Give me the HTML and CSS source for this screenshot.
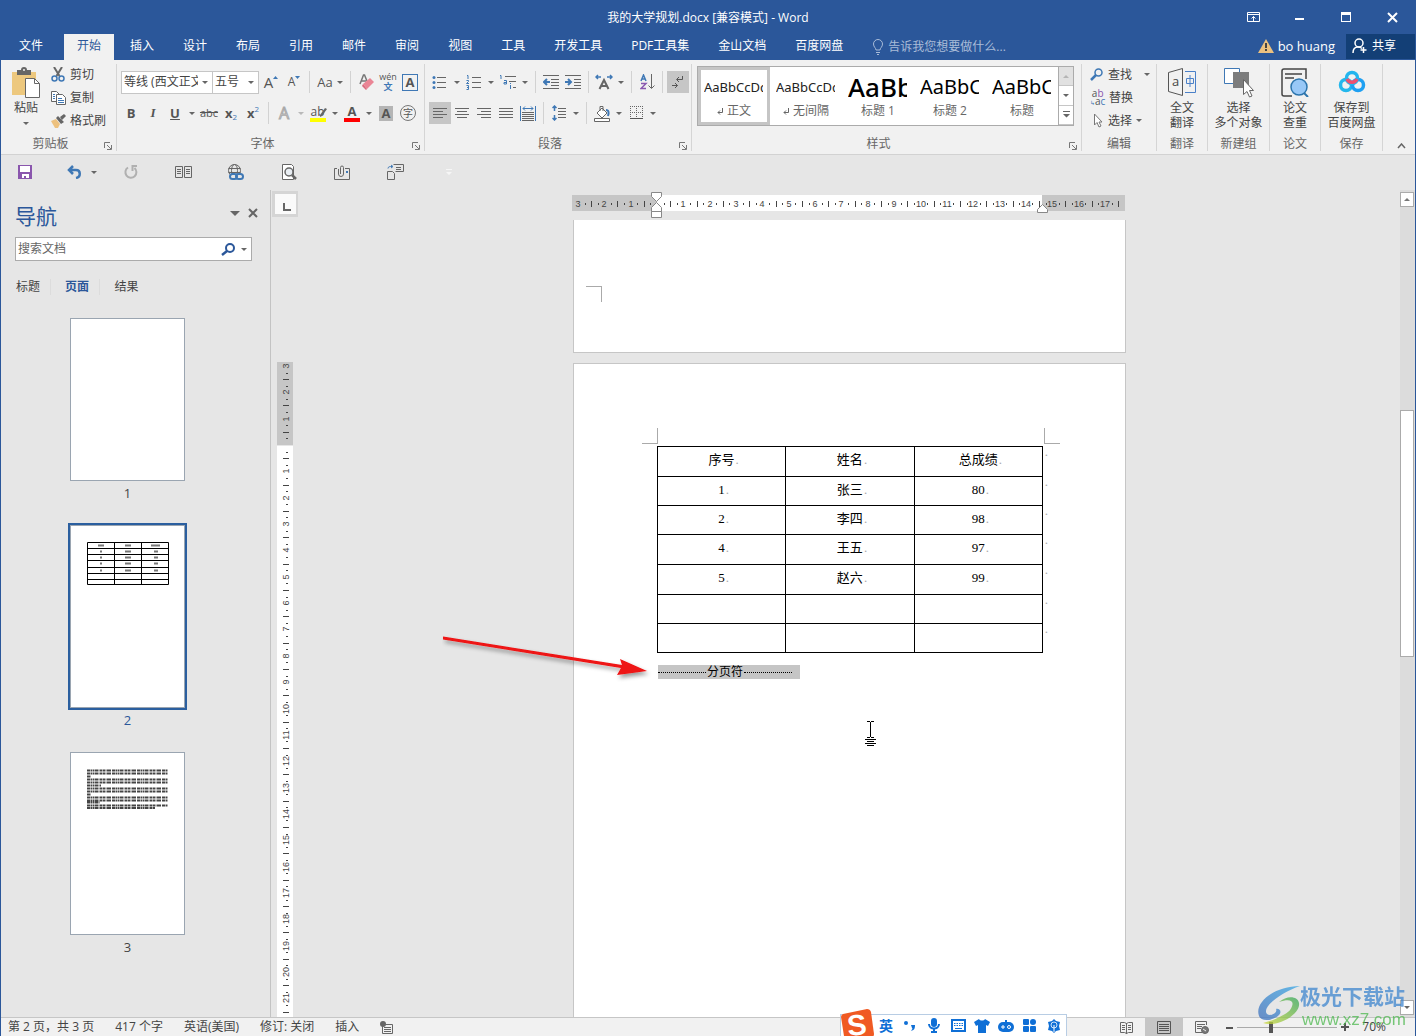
FILE: index.html
```html
<!DOCTYPE html>
<html lang="zh-CN">
<head>
<meta charset="utf-8">
<title>我的大学规划.docx [兼容模式] - Word</title>
<link rel="stylesheet" href="styles.css">
</head>
<body>
<div class="window">
  <header class="titlebar">
    <span></span>
    <h1 class="title">我的大学规划.docx [兼容模式] - Word</h1>
    <div class="win-buttons">
      <button aria-label="功能区显示选项"><svg width="14" height="12" fill="none" stroke="#fff"><path d="M.5 1.5h12v9H.5zM.5 3.500h12M6.500 10V5.500M4.500 7.500l2-2 2 2"/></svg></button>
      <button aria-label="最小化"><svg width="10" height="10"><path d="M0 6h9v2H0z" fill="#fff"/></svg></button>
      <button aria-label="最大化"><svg width="10" height="10"><path d="M0 0h10v10H0zM1 3v6h8V3z" fill="#fff" fill-rule="evenodd"/></svg></button>
      <button aria-label="关闭"><svg width="11" height="11"><path d="M1 1l9 9M10 1l-9 9" stroke="#fff" stroke-width="2"/></svg></button>
    </div>
  </header>

  <nav class="tabs">
    <button class="tab file">文件</button>
    <button class="tab active">开始</button>
    <button class="tab">插入</button>
    <button class="tab">设计</button>
    <button class="tab">布局</button>
    <button class="tab">引用</button>
    <button class="tab">邮件</button>
    <button class="tab">审阅</button>
    <button class="tab">视图</button>
    <button class="tab">工具</button>
    <button class="tab">开发工具</button>
    <button class="tab">PDF工具集</button>
    <button class="tab">金山文档</button>
    <button class="tab">百度网盘</button>
    <button class="tell"><svg width="12" height="16" fill="none" stroke="#a9bcd8"><path d="M4 11c0-2-2.500-3-2.500-6a4.500 4.500 0 0 1 9 0c0 3-2.500 4-2.500 6zM4 13.500h4M5 15.500h2"/></svg>告诉我您想要做什么...</button>
    <div class="account">
      <svg width="16" height="14"><path d="M8 0l8 14H0z" fill="#ecc17f"/><path d="M7 4h2v5H7zM7 10h2v2H7z" fill="#444"/></svg>
      <span>bo huang</span>
    </div>
    <button class="share"><svg width="16" height="16" fill="none" stroke="#fff" stroke-width="1.500"><circle cx="7" cy="5" r="4"/><path d="M1 15c0-4 2-6 5-6 2 0 3 .5 4 1.500M11.500 9v6M8.500 12h6"/></svg>共享</button>
  </nav>

  <section class="ribbon">
    <div class="group g-clip">
      <div class="body clip">
        <button class="paste">
          <svg width="30" height="32"><path d="M1 5h24v23H1z" fill="#edc87e"/><path d="M6 8V3h4a3 3 0 0 1 6 0h4v5z" fill="#666"/><circle cx="13" cy="3" r="1" fill="#f1f1f1"/><path d="M14.500 11.500h9l5 5v14h-14z" fill="#fff" stroke="#666"/><path d="M23.500 11.500v5h5" fill="none" stroke="#666"/></svg>
          <span>粘贴</span><i class="caret"></i>
        </button>
        <div class="stack">
          <button class="line"><svg width="14" height="15" fill="none"><path d="M3 0l5.500 9M11 0L5.500 9" stroke="#666" stroke-width="2"/><circle cx="3.500" cy="11.500" r="2.500" stroke="#3f78b5" stroke-width="1.500"/><circle cx="10.500" cy="11.500" r="2.500" stroke="#3f78b5" stroke-width="1.500"/></svg>剪切</button>
          <button class="line"><svg width="15" height="14" stroke="#666" fill="#fff"><path d="M.5.5h5l3 3v7h-8z"/><path d="M5.500 3.500h6l3 3v7h-9z"/><path d="M7 7.500h4M7 9.500h6M7 11.500h6M2 3.500h2M2 5.500h2M2 7.500h2" stroke="#3f78b5"/></svg>复制</button>
          <button class="line"><svg width="15" height="14"><path d="M0 7l5-2 4 5-2 4H4z" fill="#edc17e"/><path d="M5 4l2-2 6 6-3 2zM9 3l4-3 2 2-4 4z" fill="#666"/></svg>格式刷</button>
        </div>
      </div>
      <div class="foot"><span>剪贴板</span><button class="launch" aria-label="剪贴板选项"><svg width="8" height="8"><path d="M.5 6V.5H6M3 3l4 4M7.500 3v4.500H3" fill="none" stroke="#777"/></svg></button></div>
    </div>

    <div class="group g-font">
      <div class="body rows">
        <div class="row">
          <span class="combo wide"><select aria-label="字体"><option>等线 (西文正文)</option></select></span>
          <span class="combo"><select aria-label="字号"><option>五号</option></select></span>
          <button class="ib big" aria-label="增大字号">A<svg width="5" height="14"><path d="M0 4l2.500-3L5 4z" fill="#3f78b5"/></svg></button>
          <button class="ib" aria-label="减小字号">A<svg width="5" height="14"><path d="M0 1h5L2.500 4z" fill="#3f78b5"/></svg></button>
          <i class="sep"></i>
          <button class="ib mid">Aa<i class="caret"></i></button>
          <i class="sep"></i>
          <button class="ib" aria-label="清除格式"><svg width="15" height="16"><path d="M1 10L4.500 1h1L8 7M2.500 7H7" stroke="#777" fill="none" stroke-width="1.500"/><path d="M4 10l7-6 4 4-7 7z" fill="#ea8595"/><path d="M4 10l4 5-1 1-4-4z" fill="#d96a7d"/></svg></button>
          <button class="ib pinyin" aria-label="拼音指南"><span>wén</span><b>文</b></button>
          <button class="ib" aria-label="字符边框"><b class="boxed">A</b></button>
        </div>
        <div class="row r2">
          <button class="ib"><b>B</b></button>
          <button class="ib"><b class="ital">I</b></button>
          <button class="ib"><b class="under">U</b></button>
          <button class="cb" aria-label="下划线选项"><i class="caret"></i></button>
          <button class="ib strike">abc</button>
          <button class="ib"><b>x</b><sub>2</sub></button>
          <button class="ib"><b>x</b><sup>2</sup></button>
          <i class="sep"></i>
          <button class="ib outline">A</button>
          <button class="cb dim" aria-label="文本效果选项"><i class="caret"></i></button>
          <button class="ib" aria-label="突出显示"><span class="bar hi">ab</span><svg class="pen" width="8" height="10"><path d="M8 1L3 8 1 9V7l5-7z" fill="#666"/></svg></button>
          <button class="cb" aria-label="突出显示颜色"><i class="caret"></i></button>
          <button class="ib" aria-label="字体颜色"><b class="bar red">A</b></button>
          <button class="cb" aria-label="字体颜色选项"><i class="caret"></i></button>
          <button class="ib"><b class="shade">A</b></button>
          <button class="ib"><span class="ring">字</span></button>
        </div>
      </div>
      <div class="foot"><span>字体</span><button class="launch" aria-label="字体选项"><svg width="8" height="8"><path d="M.5 6V.5H6M3 3l4 4M7.500 3v4.500H3" fill="none" stroke="#777"/></svg></button></div>
    </div>

    <div class="group g-para">
      <div class="body rows">
        <div class="row">
          <button class="ib" aria-label="项目符号"><svg width="16" height="16"><path d="M5 3.500h9M5 8.500h9M5 13.500h9" stroke="#666"/><g fill="#3f78b5"><circle cx="2" cy="3.500" r="1.500"/><circle cx="2" cy="8.500" r="1.500"/><circle cx="2" cy="13.500" r="1.500"/></g></svg></button>
          <button class="cb" aria-label="项目符号选项"><i class="caret"></i></button>
          <button class="ib" aria-label="编号"><svg width="16" height="16" fill="none"><path d="M6 3.500h9M6 8.500h9M6 13.500h9" stroke="#666"/><path d="M1 1.500h1V5M.5 6.500h2v1l-2 2h2.500M.5 11.500h2v4h-2M1 13.500h1" stroke="#3f78b5"/></svg></button>
          <button class="cb" aria-label="编号选项"><i class="caret"></i></button>
          <button class="ib" aria-label="多级列表"><svg width="18" height="16" fill="none"><path d="M6 2.500h11M10 7.500h7M14 13.500h3" stroke="#666"/><path d="M1 1.500h1V5M5 6.500h2.500V10H5V8.500h2M11.500 11v4M11.500 9v1" stroke="#3f78b5"/></svg></button>
          <button class="cb" aria-label="多级列表选项"><i class="caret"></i></button>
          <i class="sep"></i>
          <button class="ib" aria-label="减少缩进"><svg width="16" height="14"><path d="M0 .5h16M8 4.500h8M8 7.500h8M8 10.500h8M0 13.500h16" stroke="#666"/><path d="M7 7H2M4 4L1 7l3 3" stroke="#3f78b5" stroke-width="2" fill="none"/></svg></button>
          <button class="ib" aria-label="增加缩进"><svg width="16" height="14"><path d="M0 .5h16M9 4.500h7M9 7.500h7M9 10.500h7M0 13.500h16" stroke="#666"/><path d="M0 7h6M3 4l3 3-3 3" stroke="#3f78b5" stroke-width="2" fill="none"/></svg></button>
          <i class="sep"></i>
          <button class="ib" aria-label="中文版式"><svg width="18" height="16" fill="none"><path d="M4.500 15L9 6l4.500 9M6 12h6" stroke="#666" stroke-width="2"/><path d="M1 3h5M3 1L1 3l2 2M12 3h5M15 1l2 2-2 2" stroke="#3f78b5" stroke-width="1.500"/></svg></button>
          <button class="cb" aria-label="中文版式选项"><i class="caret"></i></button>
          <i class="sep"></i>
          <button class="ib" aria-label="排序"><svg width="15" height="16" fill="none"><path d="M1 7l2.500-6L6 7M2 5h3" stroke="#3f78b5" stroke-width="1.500"/><path d="M1 9.500h5l-5 5h5" stroke="#8a5ab0" stroke-width="1.500"/><path d="M11.500 0v14M8.500 11.500l3 3 3-3" stroke="#666"/></svg></button>
          <i class="sep"></i>
          <button class="ib on" aria-label="显示编辑标记"><svg width="12" height="14" fill="none" stroke="#555"><path d="M10.500 1v3.500H5M7 2L4.500 4.500 7 7M0 10.500h5.500M3 8l2.500 2.500L3 13"/></svg></button>
        </div>
        <div class="row">
          <button class="ib on" aria-label="左对齐"><svg width="14" height="11"><path d="M0 .5h14M0 3.500h10M0 6.500h14M0 9.500h10" stroke="#666"/></svg></button>
          <button class="ib" aria-label="居中"><svg width="14" height="11"><path d="M0 .5h14M2 3.500h10M0 6.500h14M2 9.500h10" stroke="#666"/></svg></button>
          <button class="ib" aria-label="右对齐"><svg width="14" height="11"><path d="M0 .5h14M4 3.500h10M0 6.500h14M4 9.500h10" stroke="#666"/></svg></button>
          <button class="ib" aria-label="两端对齐"><svg width="14" height="11"><path d="M0 .5h14M0 3.500h14M0 6.500h14M0 9.500h14" stroke="#666"/></svg></button>
          <button class="ib" aria-label="分散对齐"><svg width="16" height="15" fill="none"><path d="M2 6.500h12M2 8.500h12M2 10.500h12M2 12.500h12M2 14.500h12" stroke="#666"/><path d="M.5 0v15M15.500 0v15M3 2.500h10M5 .5l-2 2 2 2M11 .5l2 2-2 2" stroke="#3f78b5"/></svg></button>
          <i class="sep"></i>
          <button class="ib" aria-label="行距"><svg width="14" height="16" fill="none"><path d="M6 3.500h8M6 6.500h8M6 9.500h8M6 12.500h8" stroke="#666"/><path d="M2.500 1v5M.5 3l2-2 2 2M2.500 10v5M.5 13l2 2 2-2" stroke="#3f78b5" stroke-width="1.500"/></svg></button>
          <button class="cb" aria-label="行距选项"><i class="caret"></i></button>
          <i class="sep"></i>
          <button class="ib" aria-label="底纹"><svg width="17" height="17" fill="none" stroke="#666"><path d="M8 3l5 5-5 5-5-5zM6 6V1.500h3V6" fill="#fff"/><path d="M12 5c3 0 3 3 2 6" stroke="#3f78b5" stroke-width="2"/><path d="M.5 13.500h15v3H.5z" fill="#fff"/></svg></button>
          <button class="cb" aria-label="底纹选项"><i class="caret"></i></button>
          <button class="ib" aria-label="边框"><svg width="13" height="14"><path d="M0 .5h13M0 6.500h13M.5 0v12M6.500 0v12M12.500 0v12" stroke="#666" stroke-dasharray="1 1"/><path d="M0 12.500h13" stroke="#555"/></svg></button>
          <button class="cb" aria-label="边框选项"><i class="caret"></i></button>
        </div>
      </div>
      <div class="foot"><span>段落</span><button class="launch" aria-label="段落选项"><svg width="8" height="8"><path d="M.5 6V.5H6M3 3l4 4M7.500 3v4.500H3" fill="none" stroke="#777"/></svg></button></div>
    </div>

    <div class="group g-styles">
      <div class="body gallery-wrap">
        <div class="gallery">
          <button class="style chosen"><span class="sample">AaBbCcDd</span><span class="sname"><svg width="6" height="7" fill="none" stroke="#666"><path d="M5.500 0v4.500H1M3 2.500l-2 2 2 2"/></svg>正文</span></button>
          <button class="style"><span class="sample">AaBbCcDd</span><span class="sname"><svg width="6" height="7" fill="none" stroke="#666"><path d="M5.500 0v4.500H1M3 2.500l-2 2 2 2"/></svg>无间隔</span></button>
          <button class="style"><span class="sample h1">AaBb</span><span class="sname">标题 1</span></button>
          <button class="style"><span class="sample h2">AaBbC</span><span class="sname">标题 2</span></button>
          <button class="style"><span class="sample h2">AaBbC</span><span class="sname">标题</span></button>
          <div class="gscroll">
            <button class="off" aria-label="上一行"><i class="caret up"></i></button>
            <button aria-label="下一行"><i class="caret"></i></button>
            <button aria-label="其他"><svg width="7" height="7"><path d="M0 0h7v1H0zM0 3h7L3.500 6.500z" fill="#666"/></svg></button>
          </div>
        </div>
      </div>
      <div class="foot"><span>样式</span><button class="launch" aria-label="样式选项"><svg width="8" height="8"><path d="M.5 6V.5H6M3 3l4 4M7.500 3v4.500H3" fill="none" stroke="#777"/></svg></button></div>
    </div>

    <div class="group g-edit">
      <div class="body stack">
        <button class="line"><svg width="14" height="13" fill="none" stroke="#3f78b5"><circle cx="8.500" cy="4.500" r="3.500" stroke-width="1.500"/><path d="M6 7l-5 5" stroke-width="2.500"/></svg>查找<i class="caret gap"></i></button>
        <button class="line"><span class="abac"><span>a<b>b</b></span><span><em>↳</em>a<u>c</u></span></span>替换</button>
        <button class="line"><svg width="14" height="15"><path d="M4.500 1v11l2.500-2.500L9 14l2-1-2-4h3z" fill="#fff" stroke="#777"/></svg>选择<i class="caret"></i></button>
      </div>
      <div class="foot"><span>编辑</span></div>
    </div>
    <div class="group g-small">
      <button class="body tall"><svg width="28" height="28" fill="none"><path d="M.5 4.500L14.500.5v27L.5 23.500z" stroke="#555"/><path d="M17 3.500h10.500v21H17" stroke="#4a80c8"/><text x="4" y="18" font-size="13" fill="#444">a</text><path d="M18.500 10.500h7v5h-7zM22 7v12" stroke="#4a80c8"/></svg><span>全文<br>翻译</span></button>
      <div class="foot"><span>翻译</span></div>
    </div>
    <div class="group g-wide">
      <button class="body tall"><svg width="30" height="30"><path d="M.5.5h15v15H.5z" fill="#fff" stroke="#3f78b5"/><path d="M9 4h16v16H9z" fill="#7d7d7d"/><path d="M19.500 11.500v15l3.500-3 2.500 5.500 2.500-1-2.500-5.500h4z" fill="#fff" stroke="#666"/></svg><span>选择<br>多个对象</span></button>
      <div class="foot"><span>新建组</span></div>
    </div>
    <div class="group g-small">
      <button class="body tall"><svg width="28" height="29" fill="none"><path d="M25 11V1H3a2 2 0 0 0-2 2v23a2 2 0 0 0 2 2h8M4 6h17M4 10h9" stroke="#444" stroke-width="1.500"/><circle cx="18" cy="19" r="8" fill="#98c8f7" stroke="#2c75ad" stroke-width="1.500"/><path d="M23 25l4 4" stroke="#2c75ad" stroke-width="2"/></svg><span>论文<br>查重</span></button>
      <div class="foot"><span>论文</span></div>
    </div>
    <div class="group g-wide">
      <button class="body tall"><svg width="28" height="26" fill="none" stroke-width="3.500"><circle cx="8" cy="17" r="5.500" stroke="#24b7ec"/><circle cx="20" cy="17" r="5.500" stroke="#1fa0f2"/><circle cx="14" cy="10" r="5.500" stroke="#23b5ee"/><path d="M9 11a5.500 5.500 0 0 0 10 0" stroke="#f0506e"/></svg><span>保存到<br>百度网盘</span></button>
      <div class="foot"><span>保存</span></div>
    </div>
    <button class="collapse" aria-label="折叠功能区"><svg width="9" height="6"><path d="M1 5l3.500-4L8 5" fill="none" stroke="#666" stroke-width="1.500"/></svg></button>
  </section>

  <div class="qat">
    <button aria-label="保存"><svg width="14" height="14"><path d="M0 0h14v14H0z" fill="#8a56ad"/><path d="M2 1h10v6H2zM4 9h7v4H8v-2H6v2H4z" fill="#fff"/></svg></button>
    <button class="undo" aria-label="撤消"><svg width="16" height="14" fill="none" stroke="#3f78b5" stroke-width="2.500"><path d="M2 5h7c5 0 5 7 0 8M6 1L2 5l4 4"/></svg><i class="caret gap"></i></button>
    <button aria-label="恢复"><svg width="14" height="14" fill="none" stroke="#b0b0b0" stroke-width="2"><path d="M4 2.500a5.500 5.500 0 1 0 6.500.5M13 1H8.500v5"/></svg></button>
    <button aria-label="双页"><svg width="17" height="12" fill="none" stroke="#666"><path d="M.5.5h7v11h-7zM9.500.5h7v11h-7zM2 3.500h4M2 5.500h4M2 7.500h4M11 3.500h4M11 5.500h4M11 7.500h4"/></svg></button>
    <button aria-label="超链接"><svg width="17" height="17" fill="none" stroke="#666"><circle cx="6.500" cy="6.500" r="6"/><ellipse cx="6.500" cy="6.500" rx="3" ry="6"/><path d="M.5 4.500h12M.5 8.500h12"/><g stroke="#e6e6e6" stroke-width="5"><path d="M3 13h12"/></g><g stroke="#3f78b5" stroke-width="2"><rect x="2" y="10" width="7" height="5" rx="2.500"/><rect x="8" y="10" width="7" height="5" rx="2.500"/></g></svg></button>
    <button aria-label="打印预览"><svg width="15" height="16" fill="none" stroke="#666"><path d="M.5.5h9l2 2v13H.5z" fill="#fff"/><circle cx="7" cy="8" r="4" fill="#e9eef3" stroke-width="1.500"/><path d="M10 11l4 4" stroke-width="2.500"/></svg></button>
    <button aria-label="附件"><svg width="17" height="15" fill="none" stroke="#666"><path d="M3 3.500H.5v11h15v-11H11"/><path d="M4.500 4v5a2 2 0 0 0 5 0V2.500a1.500 1.500 0 0 0-3 0V9"/><path d="M12 6h2v2h-2z" fill="#3f78b5" stroke="none"/></svg></button>
    <button aria-label="插入对象"><svg width="17" height="16" fill="none" stroke="#666"><path d="M.5 7.500h5l2 2v6h-7zM6.500.5h10v7h-8M9 3.500h5M9 5.500h5"/><path d="M1 4.500c0-2 2-2 4-2M4 1l2 1.500L4 4" stroke="#3f78b5"/></svg></button>
    <button class="qmore" aria-label="自定义快速访问工具栏"><svg width="6" height="6"><path d="M0 0h6v1H0zM0 3h6L3 6z" fill="#f6f6f6"/></svg></button>
  </div>

  <main class="work">
    <aside class="nav">
      <div class="nav-head"><h2>导航</h2><i class="caret large"></i><button aria-label="关闭窗格"><svg width="10" height="10"><path d="M1 1l8 8M9 1L1 9" stroke="#666" stroke-width="2"/></svg></button></div>
      <div class="search">
        <input type="text" aria-label="搜索文档" placeholder="搜索文档">
        <svg width="14" height="13" fill="none" stroke="#2b579a"><circle cx="9" cy="5" r="4" stroke-width="2"/><path d="M6 8l-5 4" stroke-width="2.500"/></svg>
        <i class="caret"></i>
      </div>
      <div class="nav-tabs"><button>标题</button><button class="cur">页面</button><button>结果</button></div>
      <div class="thumbs">
        <figure><div class="thumb"></div><figcaption>1</figcaption></figure>
        <figure class="sel"><div class="thumb">
          <svg width="82" height="43" fill="none" stroke="#000"><path d="M.5.5h81v42H.5zM0 6.500h82M0 12.500h82M0 18.500h82M0 25.500h82M0 31.500h82M0 37.500h82M27.500 0v43M54.500 0v43"/><path d="M11 3.500h6M38 3.500h6M64 3.500h9M38 9.500h6M38 15.500h6M38 21.500h6M38 28.500h6M13 9.500h2M13 15.500h2M13 21.500h2M13 28.500h2M67 9.500h4M67 15.500h4M67 21.500h4M67 28.500h4" stroke="#777" stroke-width="2"/></svg>
        </div><figcaption>2</figcaption></figure>
        <figure class="third"><div class="thumb">
          <svg width="82" height="40" fill="none" stroke="#444" stroke-width="2" stroke-dasharray="3 .5 2 .5 1 .5 4 1"><path d="M0 1.500h81M0 4.500h81M0 7.500h4M0 10.500h81M0 13.500h81M0 16.500h14M0 19.500h81M0 22.500h81M0 25.500h4M0 28.500h81M0 31.500h81M0 33.500h13M0 36.500h81M0 39h68"/></svg>
        </div><figcaption>3</figcaption></figure>
      </div>
    </aside>

    <div class="corner"><button aria-label="制表符"><svg width="8" height="8"><path d="M1 0v7h7" fill="none" stroke="#666" stroke-width="2"/></svg></button></div>
    <svg class="hruler" width="553" height="30" id="hruler"></svg>
    <div class="scroll">
      <button aria-label="向上滚动"><i class="caret up"></i></button>
      <i class="before"></i><i class="handle"></i><i class="after"></i>
      <button aria-label="向下滚动"><i class="caret"></i></button>
    </div>
    <div class="vcol"><svg width="16" height="690" id="vruler"></svg></div>
    <div class="canvas">
      <article class="page first"><i class="mark bottom-left"></i></article>
      <article class="page second">
        <i class="mark top-left"></i><i class="mark top-right"></i>
        <table class="grades">
          <thead><tr class="high"><th>序号</th><th>姓名</th><th>总成绩</th></tr></thead>
          <tbody>
            <tr><td>1</td><td>张三</td><td>80</td></tr>
            <tr><td>2</td><td>李四</td><td>98</td></tr>
            <tr class="high"><td>4</td><td>王五</td><td>97</td></tr>
            <tr class="high"><td>5</td><td>赵六</td><td>99</td></tr>
            <tr><td class="none"></td><td class="none"></td><td class="none"></td></tr>
            <tr><td class="none"></td><td class="none"></td><td class="none"></td></tr>
          </tbody>
        </table>
        <p class="break"><i></i>分页符<i></i></p>
        <svg class="pointer" width="216" height="56">
          <defs><filter id="sh" x="-10%" y="-50%" width="120%" height="220%"><feDropShadow dx="2" dy="3" stdDeviation="2" flood-opacity=".4"/></filter></defs>
          <path filter="url(#sh)" fill="#ee1212" d="M1 4.500L180 33l-2-6 27 12-30 4 4-7L1 7.500z"/>
        </svg>
        <svg class="ibeam" width="12" height="26" fill="none" stroke="#000"><path d="M2 .5h3M6 .5h3M5.500 1v15M2 16.500h3M6 16.500h3M0 18.500h11M2 20.500h7M0 22.500h11M2 24.500h7"/></svg>
      </article>
    </div>
  </main>

  <footer class="status">
    <span>第 2 页，共 3 页</span><span>417 个字</span><span>英语(美国)</span><span>修订: 关闭</span><span>插入</span>
    <svg width="13" height="13"><path d="M2.500 3.500h10v9h-10zM4 6.500h7M4 8.500h7M4 10.500h7" fill="none" stroke="#666"/><circle cx="3" cy="3" r="3" fill="#666"/></svg>
    <div class="views">
      <button aria-label="阅读视图"><svg width="13" height="13" fill="none" stroke="#666"><path d="M.5 1.500h4l2 1 2-1h4v10h-4l-2 1-2-1h-4zM6.500 2v11M2 4.500h3M2 6.500h3M2 8.500h3M8 4.500h3M8 6.500h3M8 8.500h3"/></svg></button>
      <button class="on" aria-label="页面视图"><svg width="14" height="13" fill="none" stroke="#555"><path d="M.5.5h13v12H.5zM2 3.500h10M2 5.500h10M2 7.500h10M2 9.500h10"/></svg></button>
      <button aria-label="Web 版式视图"><svg width="15" height="13" fill="none" stroke="#666"><path d="M7 11.500H.5V.5h11V4M2 3.500h8M2 5.500h5M2 7.500h4"/><circle cx="10" cy="9" r="3.500" fill="#777"/><path d="M8 8l3 2" stroke="#eee"/></svg></button>
      <button class="zoom" aria-label="缩小"><svg width="7" height="7"><path d="M0 3h7v2H0z" fill="#555"/></svg></button>
      <input type="range" aria-label="显示比例" min="0" max="100" value="33">
      <button class="zoom" aria-label="放大"><svg width="8" height="8"><path d="M0 3h3V0h2v3h3v2H5v3H3V5H0z" fill="#555"/></svg></button>
      <span>70%</span>
    </div>
  </footer>

  <div class="ime">
    <svg class="sogou" width="34" height="32"><path d="M2 6l24-5q3 0 4 3l3 22q0 3-3 4L8 32q-4 0-5-4L0 9q0-2 2-3z" fill="#f05a23"/><text x="6" y="27" font-size="29" font-weight="700" fill="#fff" transform="rotate(-6 16 16)">S</text></svg>
    <b>英</b>
    <svg width="14" height="14" fill="#0f6fd6"><circle cx="3" cy="4" r="2"/><path d="M8 6h4c0 4-1 5-4 6 1-2 2-2 1-3z"/></svg>
    <svg width="14" height="15" fill="none" stroke="#0f6fd6" stroke-width="2"><rect x="5" y="1" width="4" height="7" rx="2" fill="#0f6fd6"/><path d="M2 6c0 6 10 6 10 0M7 10v4M4 14h6"/></svg>
    <svg width="14" height="13" fill="none" stroke="#0f6fd6"><rect x="1" y="1" width="13" height="11" stroke-width="2"/><path d="M3 4.500h9M3 6.500h9" stroke-dasharray="1.500 1"/><path d="M4 9.500h7"/></svg>
    <svg width="14" height="14" fill="#0f6fd6"><path d="M4 0c1 2 5 2 6 0l5 3-2 4-2-1v8H3V6L1 7l-2-4z"/></svg>
    <svg width="14" height="14"><rect x="-1" y="3" width="16" height="10" rx="5" fill="#0f6fd6"/><path d="M6 1h2v3H6z" fill="#0f6fd6"/><path d="M2 8h4M4 6v4" stroke="#fff"/><circle cx="10" cy="8" r="1.500" fill="none" stroke="#fff"/></svg>
    <svg width="14" height="13" fill="#0f6fd6"><rect width="6" height="6" rx="1"/><circle cx="10" cy="3" r="3"/><rect y="7" width="6" height="6" rx="1"/><rect x="7" y="7" width="6" height="6" rx="1"/></svg>
    <svg width="14" height="14"><path d="M7 0l2 2 4 1-1 4 1 4-4 1-2 2-2-2-4-1 1-4-1-4 4-1z" fill="#0f6fd6"/><circle cx="7" cy="6" r="3" fill="none" stroke="#cfe3f8"/><path d="M7 6v7" stroke="#fff"/></svg>
  </div>

  <div class="watermark">
    <svg width="42" height="42"><defs><linearGradient id="b" x1="0" y1="1" x2="1" y2="0"><stop offset="0" stop-color="#3f6fbb"/><stop offset="1" stop-color="#37a7e6"/></linearGradient><linearGradient id="g" x1="0" y1="1" x2="1" y2="0"><stop offset="0" stop-color="#cfd83a"/><stop offset="1" stop-color="#33a75a"/></linearGradient></defs><path d="M42 1C16 1-4 18 1 31c2 6 14 5 20-1 3-3 1-7-3-6 2 3-5 8-9 5C3 22 24 7 42 1z" fill="url(#b)"/><path d="M21 17c12-4 17-1 11 8-2 3-12 8-17 10l-10 3c13 5 38-8 36-20-1-7-12-8-20-1z" fill="url(#g)"/></svg>
    <div><strong>极光下载站</strong><span>www.xz7.com</span></div>
  </div>
</div>
<script src="ruler.js"></script>
</body>
</html>
```

FILE: ruler.js
```js
// Draws both rulers: a number per unit, a bar at each half and a dot at each quarter.
const UNIT = 26.35;

function marks(zero, length, draw) {
  for (let q = -14; q < 100; q++) {
    const at = Math.round(zero + q * UNIT / 4);
    if (at < 2 || at > length - 2 || q === 0) continue;
    draw(at, q % 4 === 0 ? 'num' : q % 2 === 0 ? 'bar' : 'dot', Math.abs(q / 4));
  }
}

let h = '<rect y="5" width="553" height="16" fill="#c6c6c6"/><rect x="85" y="5" width="385" height="16" fill="#fff"/>';
marks(85, 553, (x, kind, n) => {
  if (kind === 'num') h += `<text x="${x}" y="17" text-anchor="middle">${n}</text>`;
  else h += `<rect x="${x}" y="${kind === 'bar' ? 11 : 13}" width="1" height="${kind === 'bar' ? 6 : 2}" fill="#444"/>`;
});
h += '<g fill="#fff" stroke="#888"><path d="M79.500 2.500h10v4l-5 5-5-5zM84.500 12.500l5 5v4h-10v-4zM79.500 21.500h10v6h-10zM470.500 14.500l5 5v3h-10v-3z"/></g>';
document.getElementById('hruler').innerHTML = h;

let v = '<rect width="16" height="83" fill="#c6c6c6"/><rect y="84" width="16" height="620" fill="#fff"/>';
marks(83, 670, (y, kind, n) => {
  if (kind === 'num') v += `<text transform="translate(12 ${y}) rotate(-90)" text-anchor="middle">${n}</text>`;
  else v += `<rect x="${kind === 'bar' ? 6 : 9}" y="${y}" width="${kind === 'bar' ? 6 : 2}" height="1" fill="#444"/>`;
});
document.getElementById('vruler').innerHTML = v;
```

FILE: styles.css
```css
* { box-sizing: border-box; }
body { margin: 0; font: 12px/16px "Open Sans", "Noto Sans CJK SC", sans-serif; color: #444; }
button { font: inherit; color: inherit; background: none; border: 0; padding: 0; margin: 0; white-space: nowrap; }
svg { display: block; flex: none; }
h1, h2, p, figure { margin: 0; font-weight: 400; }

.window { position: relative; display: flex; flex-direction: column; height: 100vh; overflow: hidden; border: solid #2b579a; border-width: 0 1px; background: #e6e6e6; }
.caret { flex: none; width: 0; height: 0; border: 3px solid transparent; border-top-color: #666; border-bottom: 0; }
.caret.up { border-top: 0; border-bottom: 3px solid #777; }
.caret.large { border-width: 5px 5px 0; }
.caret.gap { margin-left: 8px; }

/* title bar and tabs */
.titlebar { display: grid; grid-template-columns: 1fr auto 1fr; align-items: center; height: 34px; flex: none; background: #2b579a; color: #fff; }
.title { font-size: 12px; line-height: 16px; padding-top: 2px; }
.win-buttons { display: flex; justify-content: flex-end; }
.win-buttons button { display: grid; place-items: center; width: 46px; height: 32px; }
.tabs { display: flex; flex: none; height: 26px; gap: 3px; padding-left: 5px; background: #2b579a; color: #fff; }
.tab { padding: 0 13px 2px; }
.tab.file { margin-right: 5px; }
.tab.active { background: #f1f1f1; color: #2b579a; }
.tell { display: flex; align-items: center; gap: 4px; margin-left: 13px; color: #a9bcd8; }
.account { display: flex; align-items: center; gap: 4px; margin-left: auto; padding: 0 8px 2px 0; font-size: 13px; }
.share { display: flex; align-items: center; gap: 4px; width: 69px; height: 25px; padding: 0 0 2px 6px; background: #133f76; }

/* ribbon */
.ribbon { display: flex; flex: none; height: 95px; background: #f1f1f1; border-bottom: 1px solid #d2d2d2; }
.group { position: relative; display: flex; flex-direction: column; flex: none; border-right: 1px solid #d5d5d5; margin: 4px 0 3px; }
.g-clip { width: 116px; }
.g-font { width: 308px; }
.g-para { width: 267px; }
.g-styles { flex: 1; min-width: 0; }
.g-edit { width: 75px; }
.g-small { width: 51px; }
.g-wide { width: 62px; }
.body { flex: 1; min-height: 0; }
.foot { display: flex; align-items: center; height: 17px; padding-top: 2px; color: #666; }
.foot span { flex: 1; text-align: center; }
.launch { display: grid; place-items: center; width: 16px; height: 16px; padding-top: 4px; }
.clip { display: flex; }
.paste { display: flex; flex-direction: column; align-items: center; width: 50px; padding-top: 3px; gap: 1px; }
.paste .caret { margin-top: 5px; }
.stack { display: flex; flex-direction: column; margin-top: -1px; }
.line { display: flex; align-items: center; height: 23px; gap: 4px; }
.g-clip .line svg { width: 15px; }
.g-edit .stack { padding-left: 8px; }
.abac { display: grid; width: 15px; font-size: 10px; line-height: 8px; color: #555; }
.abac b { font-weight: 400; color: #8a56ad; }
.abac em, .abac u { font-style: normal; text-decoration: none; color: #3f78b5; }
.abac em { font-size: 6px; }
.rows { display: flex; flex-direction: column; gap: 9px; padding: 7px 0 0 4px; }
.row { display: flex; align-items: center; height: 22px; }
.r2 { margin-left: -1px; }
.ib { display: flex; align-items: center; justify-content: center; flex: none; width: 22px; height: 22px; color: #555; }
.ib b { font-size: 13px; }
.ib.big { font-size: 15px; width: 24px; }
.ib.mid { width: 32px; gap: 4px; font-size: 13px; }
.ib.on, .views .on { background: #c6c6c6; }
.cb { display: grid; place-items: center; flex: none; width: 12px; height: 22px; }
.dim { opacity: .4; }
.sep { flex: none; width: 1px; height: 22px; margin: 0 4px; background: #d2d2d2; }
.combo { position: relative; flex: none; width: 47px; height: 23px; margin-left: -1px; }
.combo.wide { width: 92px; margin-left: 0; }
.combo::after { content: ""; position: absolute; right: 5px; top: 10px; border: 3px solid transparent; border-top-color: #666; border-bottom: 0; }
.combo select { width: 100%; height: 23px; appearance: none; border: 1px solid #c6c6c6; border-radius: 0; background: #fff; padding: 0 14px 0 2px; font: inherit; color: #444; }
.ital { font-family: "Liberation Serif", serif; font-style: italic; }
.under { text-decoration: underline; }
.strike { font-size: 11px; text-decoration: line-through; }
sub, sup { font-size: 8px; line-height: 8px; color: #3f78b5; }
sub { align-self: flex-end; padding-bottom: 3px; }
sup { align-self: flex-start; padding-top: 3px; }
.pinyin { flex-direction: column; font-size: 9px; line-height: 10px; }
.ib.pinyin b { font-size: 9px; color: #3f78b5; }
.boxed { width: 16px; height: 17px; border: 1px solid #3f78b5; line-height: 15px; }
.outline { font-size: 16px; color: #f1f1f1; -webkit-text-stroke: 1px #aaa; }
.bar { width: 16px; height: 17px; line-height: 13px; border-bottom: 4px solid #ff0; font-size: 12px; }
.bar.red { border-color: #f00; }
.pen { margin-left: -7px; }
.shade { width: 14px; height: 15px; line-height: 15px; background: #b5b5b5; }
.ring { width: 16px; height: 16px; border: 1px solid #777; border-radius: 50%; font-size: 10px; line-height: 14px; }

.gallery-wrap { padding: 2px 7px 0 5px; }
.gallery { display: flex; height: 60px; border: 1px solid #ababab; background: #fff; overflow: hidden; }
.style { display: flex; flex-direction: column; flex: none; width: 72px; padding: 1px 3px 0; border: 3px solid transparent; overflow: hidden; }
.style.chosen { border-color: #c5c5c5; }
.sample { display: block; width: 59px; height: 32px; overflow: hidden; font: 13px/32px "Noto Sans", sans-serif; color: #222; text-align: left; }
.sample.h1 { font-size: 26px; font-weight: 500; color: #000; }
.sample.h2 { font-size: 20px; color: #000; }
.sname { display: flex; align-items: center; justify-content: center; gap: 4px; color: #666; }
.gscroll { display: flex; flex-direction: column; width: 15px; margin-left: auto; border-left: 1px solid #ababab; }
.gscroll button { display: grid; place-items: center; flex: 1; border-bottom: 1px solid #c6c6c6; }
.gscroll .off { background: #e1e1e1; }
.gscroll .off .caret { border-bottom-color: #b5b5b5; }

.tall { display: flex; flex-direction: column; align-items: center; justify-content: space-between; padding-top: 4px; line-height: 15px; }
.tall span { padding-bottom: 4px; }
.tall svg { max-height: 30px; }
.collapse { display: grid; place-items: center; width: 32px; margin-left: auto; align-self: flex-end; height: 16px; padding-left: 4px; }

/* quick access */
.qat { display: flex; flex: none; height: 35px; margin-left: -3px; padding-bottom: 1px; }
.qat button { display: flex; align-items: center; justify-content: center; width: 53px; }
.qat .undo { padding-left: 8px; }

/* working area */
.work { display: grid; flex: 1; min-height: 0; grid-template: 30px minmax(0, 1fr) / 270px 28px minmax(0, 1fr) 15px; }
.nav { grid-row: 1 / 3; min-height: 0; overflow: hidden; border-right: 1px solid #c3c3c3; padding: 0 18px 0 14px; }
.nav-head { display: flex; align-items: center; gap: 8px; height: 47px; margin-right: -6px; padding-top: 5px; }
.nav-head .caret { margin: -6px 0 0 auto; }
.nav-head button { margin-top: -6px; }
.nav h2 { font-size: 21px; line-height: 28px; color: #2b579a; }
.search { display: flex; align-items: center; gap: 6px; height: 24px; padding: 0 4px 0 2px; border: 1px solid #ababab; background: #fff; }
.search input { flex: 1; min-width: 0; border: 0; outline: 0; padding: 0; font: inherit; background: none; }
.search input::placeholder { color: #666; }
.nav-tabs { display: flex; margin: 18px 0 0 -13px; }
.nav-tabs button { width: 49px; padding-left: 4px; border-right: 1px solid #dcdcdc; }
.nav-tabs button:last-child { border: 0; }
.nav-tabs .cur { font-weight: 700; color: #2b579a; }
.thumbs { display: flex; flex-direction: column; align-items: center; padding: 21px 12px 0 0; }
figure { padding: 2px; height: 207px; }
.thumb { width: 115px; height: 163px; border: 1px solid #9aa5b1; background: #fff; padding: 16px; }
figcaption { padding-top: 4px; text-align: center; font-size: 13px; }
.sel, .third { height: 227px; }
.sel .thumb, .third .thumb { height: 183px; }
.sel .thumb { outline: 2px solid #2b5f9f; }
.sel figcaption { color: #2b579a; }

.corner { display: grid; place-items: center; width: 26px; height: 26px; margin: 1px; background: #d5d5d5; }
.corner button { display: grid; place-items: center; width: 21px; height: 20px; padding: 5px 0 0 3px; background: #fafafa; }
.hruler { justify-self: center; margin-right: 2px; }
#hruler, #vruler { font: 9px "Liberation Sans", sans-serif; fill: #444; }
.vcol { grid-column: 2; grid-row: 2; overflow: hidden; padding: 142px 0 0 6px; }
.scroll { grid-column: 4; grid-row: 1 / 3; display: flex; flex-direction: column; padding: 2px 1px 2px 0; background: #dcdcdc; }
.scroll button { display: grid; place-items: center; flex: none; height: 15px; border: 1px solid #ababab; background: #fff; }
.before { flex: 204; }
.handle { flex: 245; border: 1px solid #ababab; background: #fff; }
.after { flex: 344; }
.canvas { grid-column: 3; grid-row: 2; display: flex; flex-direction: column; align-items: center; gap: 10px; overflow: hidden; }
.page { position: relative; width: 553px; border: 1px solid #c6c6c6; background: #fff; }
.first { height: 133px; flex: none; border-top: 0; }
.second { flex: 1; border-bottom: 0; padding: 82px 83px 0; }
.mark { position: absolute; width: 16px; height: 16px; border: 0 solid #aaa; }
.bottom-left { left: 12px; top: 66px; border-width: 1px 1px 0 0; }
.top-left { left: 68px; top: 64px; border-width: 0 1px 1px 0; }
.top-right { right: 65px; top: 64px; border-width: 0 0 1px 1px; }
.grades { width: 386px; table-layout: fixed; border-collapse: collapse; font: 13px/17px "Liberation Serif", "Noto Sans CJK SC", serif; color: #000; }
.grades tr { height: 29px; }
.grades .high { height: 30px; }
.grades th, .grades td { padding: 4px 0 0; border: 1px solid #000; font-weight: 400; text-align: center; vertical-align: top; }
.grades th::after, .grades td::after { content: "."; margin-right: -4px; padding-left: 1px; color: #aaa; }
.grades .none::after { content: ""; }
.grades th:last-child, .grades td:last-child { position: relative; }
.grades th:last-child::before, .grades td:last-child::before { content: "."; position: absolute; right: -6px; top: -4px; color: #aaa; }
.break { display: flex; align-items: center; gap: 1px; width: 142px; height: 14px; margin: 12px 0 0 1px; background: #c5c5c5; color: #000; line-height: 14px; }
.break i { flex: none; width: 48px; height: 1px; border-top: 1px dotted #000; }
.pointer { position: absolute; left: -132px; top: 268px; }
.ibeam { position: absolute; left: 291px; top: 357px; }

/* status bar */
.status { display: flex; align-items: center; flex: none; height: 19px; gap: 21px; padding-left: 7px; border-top: 1px solid #c6c6c6; background: #f1f1f1; white-space: nowrap; }
.views { display: flex; align-items: center; height: 18px; margin-left: auto; padding-right: 29px; }
.views button { display: grid; place-items: center; width: 38px; height: 18px; }
.views .zoom { width: 16px; }
.views input { appearance: none; width: 100px; height: 16px; margin: 0; background: linear-gradient(#aaa, #aaa) center / 100% 1px no-repeat; }
.views input::-webkit-slider-thumb { appearance: none; width: 4px; height: 11px; background: #555; }
.views span { padding-left: 9px; }

/* floating input bar and site mark */
.ime { position: absolute; left: 839px; bottom: 0; display: flex; align-items: center; gap: 10px; height: 22px; padding-right: 5px; border: 1px solid #b8cde4; border-bottom: 0; background: #fff; color: #0f6fd6; }
.ime svg { overflow: visible; }
.ime b { font-size: 14px; margin-left: -6px; }
.sogou { margin-top: -4px; font-family: "Liberation Sans", sans-serif; }
.watermark { position: absolute; right: 9px; bottom: 6px; display: flex; align-items: center; opacity: .75; }
.watermark div { display: grid; }
.watermark strong { font-size: 21px; line-height: 28px; color: #3f86cf; }
.watermark span { font: 17px/20px "Liberation Sans", sans-serif; color: #4cb84e; padding-left: 2px; }
```
